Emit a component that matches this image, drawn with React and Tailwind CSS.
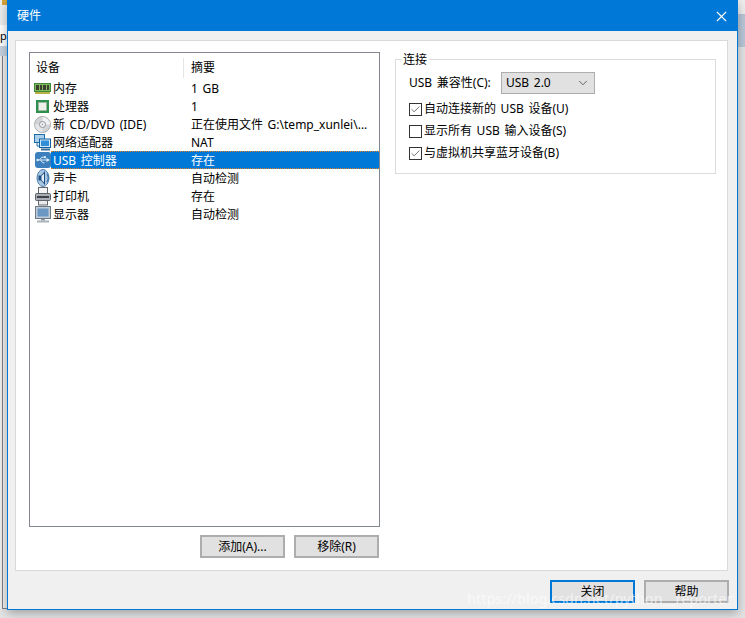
import React from 'react';
import { ChevronDown, Check, X } from 'lucide-react';

const MemoryIcon = () => (
  <svg width="17" height="11" viewBox="0 0 17 11">
    <rect x="0.5" y="0.5" width="16" height="8" fill="#7dbb5a" stroke="#3f8a3a" />
    <rect x="2" y="2" width="3" height="5" fill="#3d3d30" />
    <rect x="6" y="2" width="2" height="5" fill="#3d3d30" />
    <rect x="9" y="2" width="3" height="5" fill="#3d3d30" />
    <rect x="13" y="2" width="2" height="5" fill="#3d3d30" />
    <rect x="1" y="9" width="15" height="2" fill="#b9b04a" />
  </svg>
);

const CpuIcon = () => (
  <svg width="13" height="13" viewBox="0 0 13 13">
    <rect x="0" y="0" width="13" height="13" fill="#2f8f4e" />
    <rect x="2.5" y="2.5" width="8" height="8" fill="#eef0ea" stroke="#a7b5a5" strokeWidth="0.6" />
  </svg>
);

const DiscIcon = () => (
  <svg width="17" height="17" viewBox="0 0 17 17">
    <circle cx="8.5" cy="8.5" r="8" fill="#d2d4d7" stroke="#a9acb0" />
    <path d="M8.5 1 A7.5 7.5 0 0 1 16 8.5 L8.5 8.5 Z" fill="#eff0f1" />
    <path d="M8.5 16 A7.5 7.5 0 0 1 1 8.5 L8.5 8.5 Z" fill="#e4e5e7" />
    <circle cx="8.5" cy="8.5" r="3" fill="#f7f7f8" stroke="#8e9196" />
    <circle cx="8.5" cy="8.5" r="1" fill="#a8abaf" />
  </svg>
);

const NetworkIcon = () => (
  <svg width="17" height="17" viewBox="0 0 17 17">
    <rect x="0.5" y="0.5" width="10" height="8" fill="#a9cfe9" stroke="#1f6da8" />
    <path d="M3 9 V12 H6" fill="none" stroke="#1f6da8" />
    <rect x="5.5" y="5" width="11" height="8.5" fill="#d5e9f7" stroke="#12609e" />
    <rect x="7" y="6.5" width="8" height="5.5" fill="#2f8fd8" />
    <rect x="7" y="14.5" width="9" height="2" fill="#3d6f9c" />
  </svg>
);

const UsbIcon = () => (
  <svg width="16" height="16" viewBox="0 0 16 16">
    <rect x="0" y="0" width="16" height="16" rx="3" fill="#3b7fbc" />
    <path d="M2 8 H12 M4.5 8 L6.8 5.2 H9 M5.5 8 L7.8 10.8 H9.5" fill="none" stroke="#dcebf7" strokeWidth="1" />
    <path d="M11.5 6 L15 8 L11.5 10 Z" fill="#dcebf7" />
    <rect x="9" y="4.2" width="2" height="2" fill="#dcebf7" />
    <circle cx="2.5" cy="8" r="1.2" fill="#dcebf7" />
  </svg>
);

const SoundIcon = () => (
  <svg width="16" height="18" viewBox="0 0 16 18">
    <ellipse cx="8" cy="9" rx="6" ry="8.5" fill="#a9c6e2" stroke="#4d7fb0" />
    <path d="M3.5 6.5 H6 L10 2 V16 L6 11.5 H3.5 Z" fill="#1f4f80" />
    <path d="M6.5 7 L9 4.5 V13.5 L6.5 11 Z" fill="#e4eef7" />
    <path d="M12 5 C13.6 7.5 13.6 10.5 12 13" fill="none" stroke="#3f72a5" strokeWidth="1.2" />
  </svg>
);

const PrinterIcon = () => (
  <svg width="16" height="19" viewBox="0 0 16 19">
    <rect x="3.5" y="0.5" width="9" height="6" fill="#f4f4f5" stroke="#62666d" />
    <rect x="0.5" y="6.5" width="15" height="7" rx="1" fill="#a9adb5" stroke="#5e6269" />
    <rect x="2" y="9" width="12" height="2" fill="#3f4247" />
    <rect x="3.5" y="13.5" width="9" height="4.5" fill="#e9eaec" stroke="#62666d" />
  </svg>
);

const MonitorIcon = () => (
  <svg width="16" height="17" viewBox="0 0 16 17">
    <rect x="0.5" y="0.5" width="15" height="12" fill="#c3cbd4" stroke="#6c7a8a" />
    <rect x="2.5" y="2.5" width="11" height="8" fill="#6b98c2" />
    <rect x="6" y="13" width="4" height="1.5" fill="#8d959d" />
    <rect x="2" y="14.5" width="12" height="2" fill="#aab2ba" />
  </svg>
);

const devices = [
  { icon: <MemoryIcon />, name: '内存', summary: '1 GB' },
  { icon: <CpuIcon />, name: '处理器', summary: '1' },
  { icon: <DiscIcon />, name: '新 CD/DVD (IDE)', summary: '正在使用文件 G:\\temp_xunlei\\...' },
  { icon: <NetworkIcon />, name: '网络适配器', summary: 'NAT' },
  { icon: <UsbIcon />, name: 'USB 控制器', summary: '存在', selected: true },
  { icon: <SoundIcon />, name: '声卡', summary: '自动检测' },
  { icon: <PrinterIcon />, name: '打印机', summary: '存在' },
  { icon: <MonitorIcon />, name: '显示器', summary: '自动检测' },
];

const DeviceRow = ({ icon, name, summary, selected }) => (
  <div className="flex h-[18px] items-center">
    <div className="flex h-[18px] w-[17px] shrink-0 items-center justify-center">{icon}</div>
    <div className={`flex h-[18px] flex-1 items-center pt-px ${selected ? 'border-y border-dotted border-[#e0812a] bg-[#0078d7] text-white' : ''}`}>
      <div className="w-[140px] shrink-0 pl-[2px] whitespace-nowrap">{name}</div>
      <div className="whitespace-nowrap">{summary}</div>
    </div>
  </div>
);

const CheckRow = ({ checked, label }) => (
  <div className="flex h-[22px] items-center gap-[2px]">
    <div className="flex h-[13px] w-[13px] items-center justify-center border border-[#333] bg-white">
      {checked && <Check size={11} strokeWidth={1.5} className="text-[#333]" />}
    </div>
    <span className="whitespace-nowrap">{label}</span>
  </div>
);

const DialogButton = ({ children, className = '' }) => (
  <button className={`flex h-[23px] w-[85px] items-center justify-center border-2 text-[12px] text-black bg-[#e1e1e1] ${className}`}>
    {children}
  </button>
);

const App = () => {
  return (
    <div className="relative flex h-[618px] w-[745px] overflow-hidden bg-[#e4e4e4] text-[12px] leading-none text-black [font-family:'Noto_Sans','Noto_Sans_CJK_SC',sans-serif] [word-spacing:1.5px]">
      {/* window behind the dialog, left edge */}
      <div className="flex h-[609px] w-[7px] shrink-0 flex-col bg-[#f0f0f0]">
        <div className="ml-[2px] h-[5px] bg-[#d9a43a]" />
        <div className="h-[20px] bg-[#eeeeee]" />
        <div className="h-[21px] overflow-hidden bg-white text-[11px] leading-[21px]">p</div>
        <div className="h-[10px] bg-[#c5d2e0]" />
        <div className="ml-[2px] flex-1 border-b border-l border-[#7c8089] bg-[#efefef]" />
      </div>

      <div className="z-10 flex h-[610px] w-[731px] shrink-0 flex-col border border-[#0078d7] bg-[#f0f0f0] shadow-[0_3px_10px_rgba(0,0,0,0.3)]">
        <div className="flex h-[30px] shrink-0 items-center justify-between bg-[#0078d7] pl-[9px] pr-[7px] text-white">
          <span>硬件</span>
          <X size={17} strokeWidth={1.5} />
        </div>

        <div className="ml-[7px] mr-[9px] mt-[9px] flex h-[531px] gap-[15px] border border-[#d9d9d9] bg-white pl-[13px] pr-[10px] pt-[11px]">
          {/* device list */}
          <div className="flex w-[351px] shrink-0 flex-col">
            <div className="h-[475px] border border-[#828790] bg-white pt-[4px] pl-[4px]">
              <div className="flex h-[22px] items-center pl-[2px]">
                <div className="w-[148px] border-r border-[#e5e5e5] leading-[20px]">设备</div>
                <div className="flex-1 pl-[7px] leading-[20px]">摘要</div>
              </div>
              {devices.map((d, i) => (
                <DeviceRow key={i} {...d} />
              ))}
            </div>
            <div className="mt-[8px] flex justify-end gap-[9px] pr-px">
              <DialogButton className="border-[#adadad]">添加(A)...</DialogButton>
              <DialogButton className="border-[#adadad]">移除(R)</DialogButton>
            </div>
          </div>

          {/* connection group */}
          <div className="relative mt-[7px] h-[115px] w-[321px] border border-[#dcdcdc] pl-[13px] pt-[11px]">
            <span className="absolute left-[5px] top-[-6px] bg-white px-[2px]">连接</span>
            <div className="flex h-[23px] items-center">
              <span className="w-[92px] whitespace-nowrap">USB 兼容性(C):</span>
              <div className="flex h-[22px] w-[94px] items-center justify-between border border-[#adadad] bg-[#e1e1e1] pl-[4px] pr-[4px]">
                <span>USB 2.0</span>
                <ChevronDown size={14} strokeWidth={1.4} className="text-[#444]" />
              </div>
            </div>
            <div className="mt-[4px]">
              <CheckRow checked label="自动连接新的 USB 设备(U)" />
              <CheckRow label="显示所有 USB 输入设备(S)" />
              <CheckRow checked label="与虚拟机共享蓝牙设备(B)" />
            </div>
          </div>
        </div>

        <div className="mt-[9px] flex justify-end gap-[9px] pr-[8px]">
          <DialogButton className="border-[#0078d7]">关闭</DialogButton>
          <DialogButton className="border-[#adadad]">帮助</DialogButton>
        </div>
      </div>

      {/* window behind the dialog, right edge */}
      <div className="flex flex-1 flex-col">
        <div className="h-[14px] bg-[#efefef]" />
        <div className="h-[33px] bg-[#b9c8da]" />
      </div>

      {/* csdn watermark */}
      <span className="absolute left-[467px] top-[591px] z-20 whitespace-nowrap text-[14.5px] text-white/60 [word-spacing:0]">https://blog.csdn.net/python__reporter</span>
    </div>
  );
};

export default App;
